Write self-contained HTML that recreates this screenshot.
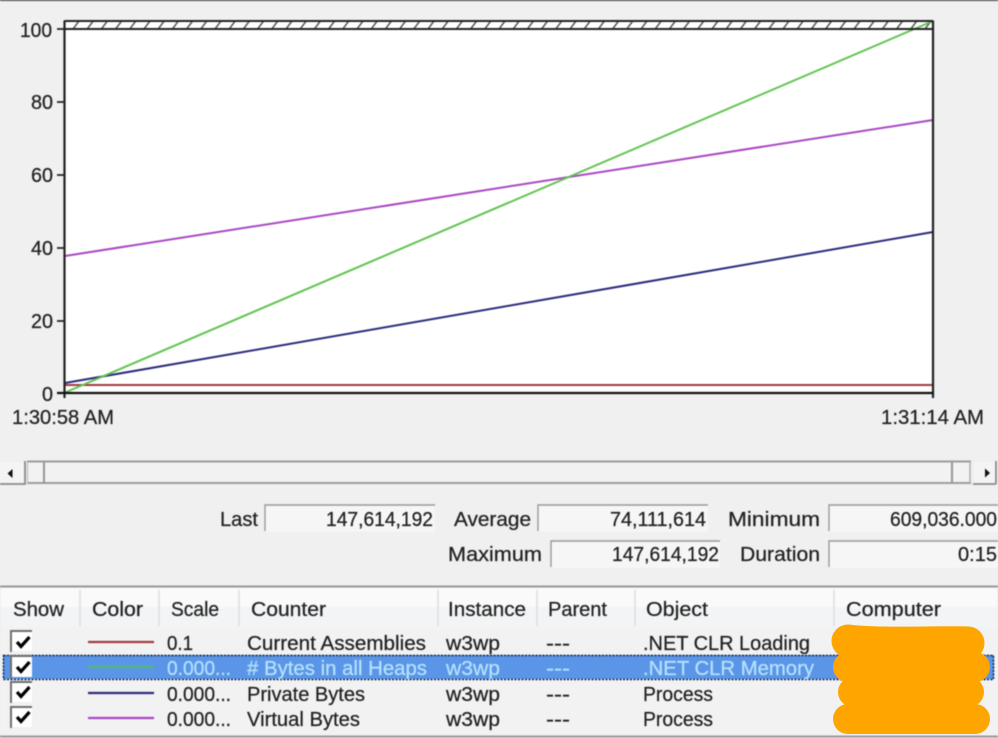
<!DOCTYPE html>
<html>
<head>
<meta charset="utf-8">
<style>
html,body{margin:0;padding:0;background:#f0f0f0;width:998px;height:738px;overflow:hidden}
svg{display:block;position:absolute;left:0;top:0}
text{font-family:"Liberation Sans",sans-serif;font-size:20px;fill:#222;stroke:#222;stroke-width:.25px}
.s{fill:#b4e2fb;stroke:#b4e2fb}
.b{filter:blur(.55px)}
</style>
</head>
<body>
<svg width="998" height="738" viewBox="0 0 998 738" xmlns="http://www.w3.org/2000/svg">
<defs>
<pattern id="h" width="14.2" height="8" patternUnits="userSpaceOnUse" x="70" y="21">
<path d="M3 8L9 0" stroke="#555" stroke-width="1.5" fill="none"/>
</pattern>
</defs>
<rect width="998" height="738" fill="#f0f0f0"/>
<g class="b">
<rect width="998" height="1" fill="#333"/>
<!-- chart -->
<rect x="64" y="21" width="869" height="372" fill="#fff"/>
<rect x="65" y="21" width="868" height="8" fill="url(#h)"/>
<path d="M65 385H933" stroke="#a03c40" stroke-width="2" fill="none"/>
<path d="M65 383L933 232" stroke="#2b2b7c" stroke-width="2" fill="none"/>
<path d="M65 256L933 120" stroke="#aa48c4" stroke-width="2" fill="none"/>
<path d="M64 393L933 21" stroke="#62c452" stroke-width="2" fill="none"/>
<path d="M64.5 21H933M64.5 29H933" stroke="#222" stroke-width="2" fill="none"/>
<path d="M64.5 20.5V398M933 20.5V398" stroke="#222" stroke-width="2.2" fill="none"/>
<path d="M57 393H933" stroke="#111" stroke-width="2.2" fill="none"/>
<path d="M57 29H64M57 102H64M57 175H64M57 248H64M57 321H64" stroke="#222" stroke-width="1.8" fill="none"/>
<text x="20" y="37" textLength="32" lengthAdjust="spacingAndGlyphs">100</text>
<text x="31" y="109" textLength="22" lengthAdjust="spacingAndGlyphs">80</text>
<text x="31" y="182" textLength="22" lengthAdjust="spacingAndGlyphs">60</text>
<text x="31" y="255" textLength="22" lengthAdjust="spacingAndGlyphs">40</text>
<text x="31" y="328" textLength="22" lengthAdjust="spacingAndGlyphs">20</text>
<text x="42" y="401" textLength="11" lengthAdjust="spacingAndGlyphs">0</text>
<text x="12" y="424" textLength="102" lengthAdjust="spacingAndGlyphs">1:30:58 AM</text>
<text x="881" y="424" textLength="103" lengthAdjust="spacingAndGlyphs">1:31:14 AM</text>
<!-- scrollbar -->
<rect x="0" y="462" width="24" height="21" fill="#f4f4f4"/>
<path d="M25 461V484H0" stroke="#8a8a8a" stroke-width="1.8" fill="none"/>
<path d="M7.5 473.5L12.5 469V478Z" fill="#111"/>
<rect x="27" y="462" width="944" height="21" fill="#f2f2f2"/>
<path d="M27 461.5H971" stroke="#9c9c9c" stroke-width="2" fill="none"/>
<path d="M27 483H971" stroke="#9c9c9c" stroke-width="2" fill="none"/>
<path d="M27.5 462V483" stroke="#c0c0c0" stroke-width="1.2" fill="none"/>
<path d="M44 462V483M952 462V483" stroke="#969696" stroke-width="2" fill="none"/>
<path d="M970 462V483" stroke="#b0b0b0" stroke-width="1.6" fill="none"/>
<rect x="974" y="462" width="24" height="21" fill="#f4f4f4"/>
<path d="M973 484H996M996 461V484" stroke="#8a8a8a" stroke-width="1.8" fill="none"/>
<path d="M990 473L985 468.5V477.5Z" fill="#111"/>
<!-- stats -->
<g fill="#f6f6f6" stroke="none">
<rect x="265" y="505" width="170" height="27"/>
<rect x="538" y="505" width="170" height="27"/>
<rect x="829" y="505" width="169" height="27"/>
<rect x="551" y="541" width="169" height="27"/>
<rect x="829" y="541" width="169" height="27"/>
</g>
<g stroke="#999" stroke-width="1.4" fill="none">
<path d="M265 531V505H435"/>
<path d="M538 531V505H708"/>
<path d="M829 531V505H998"/>
<path d="M551 567V541H720"/>
<path d="M829 567V541H998"/>
</g>
<text x="220" y="526" textLength="38" lengthAdjust="spacingAndGlyphs">Last</text>
<text x="326" y="526" textLength="107" lengthAdjust="spacingAndGlyphs">147,614,192</text>
<text x="454" y="526" textLength="77" lengthAdjust="spacingAndGlyphs">Average</text>
<text x="610" y="526" textLength="96" lengthAdjust="spacingAndGlyphs">74,111,614</text>
<text x="728" y="526" textLength="92" lengthAdjust="spacingAndGlyphs">Minimum</text>
<text x="890" y="526" textLength="107" lengthAdjust="spacingAndGlyphs">609,036.000</text>
<text x="448" y="561" textLength="94" lengthAdjust="spacingAndGlyphs">Maximum</text>
<text x="612" y="561" textLength="107" lengthAdjust="spacingAndGlyphs">147,614,192</text>
<text x="740" y="561" textLength="80" lengthAdjust="spacingAndGlyphs">Duration</text>
<text x="958" y="561" textLength="39" lengthAdjust="spacingAndGlyphs">0:15</text>
<!-- table -->
<rect x="1" y="587" width="996" height="149" fill="#f2f2f2"/>
<rect x="1" y="588" width="996" height="38" fill="#fafafa"/>
<rect x="1" y="607" width="996" height="20" fill="#f3f4f5"/>
<path d="M0 586.5H998M0 736.5H998" stroke="#999" stroke-width="2" fill="none"/>
<path d="M80 590V626M159 590V626M239 590V626M438 590V626M537 590V626M635 590V626M834 590V626" stroke="#dcdcdc" stroke-width="1.4" fill="none"/>
<text x="13" y="616" textLength="51" lengthAdjust="spacingAndGlyphs">Show</text>
<text x="92" y="616" textLength="51" lengthAdjust="spacingAndGlyphs">Color</text>
<text x="171" y="616" textLength="48" lengthAdjust="spacingAndGlyphs">Scale</text>
<text x="251" y="616" textLength="75" lengthAdjust="spacingAndGlyphs">Counter</text>
<text x="448" y="616" textLength="78" lengthAdjust="spacingAndGlyphs">Instance</text>
<text x="548" y="616" textLength="59" lengthAdjust="spacingAndGlyphs">Parent</text>
<text x="646" y="616" textLength="62" lengthAdjust="spacingAndGlyphs">Object</text>
<text x="846" y="616" textLength="95" lengthAdjust="spacingAndGlyphs">Computer</text>
<!-- selection -->
<rect x="3" y="655" width="991" height="24" fill="#5b95e8"/>
<rect x="3.5" y="655.5" width="990" height="24" fill="none" stroke="#16243e" stroke-width="1.5" stroke-dasharray="2 1.5"/>
<!-- checkboxes -->
<g>
<rect x="11" y="631" width="21" height="20" fill="#fff"/>
<path d="M11 652V631H32" stroke="#6f6f6f" stroke-width="2" fill="none"/>
<path d="M17 642L21 646.5L29.5 637" stroke="#000" stroke-width="3.2" fill="none"/>
<rect x="11" y="656" width="21" height="21" fill="#fff"/>
<path d="M11 678V656H32" stroke="#6f6f6f" stroke-width="2" fill="none"/>
<path d="M17 667L21 671.5L29.5 662" stroke="#000" stroke-width="3.2" fill="none"/>
<rect x="11" y="682" width="21" height="20" fill="#fff"/>
<path d="M11 703V682H32" stroke="#6f6f6f" stroke-width="2" fill="none"/>
<path d="M17 692L21 696.5L29.5 687" stroke="#000" stroke-width="3.2" fill="none"/>
<rect x="11" y="707" width="21" height="20" fill="#fff"/>
<path d="M11 728V707H32" stroke="#6f6f6f" stroke-width="2" fill="none"/>
<path d="M17 717L21 721.5L29.5 712" stroke="#000" stroke-width="3.2" fill="none"/>
</g>
<path d="M88 642H154" stroke="#a03c40" stroke-width="2.2" fill="none"/>
<path d="M88 667H154" stroke="#4fbc76" stroke-width="2.2" fill="none"/>
<path d="M88 693H154" stroke="#2b2b7c" stroke-width="2.2" fill="none"/>
<path d="M88 718H154" stroke="#aa48c4" stroke-width="2.2" fill="none"/>
<text x="167" y="650" textLength="26" lengthAdjust="spacingAndGlyphs">0.1</text>
<text x="247" y="650" textLength="179" lengthAdjust="spacingAndGlyphs">Current Assemblies</text>
<text x="446" y="650" textLength="54" lengthAdjust="spacingAndGlyphs">w3wp</text>
<text x="546" y="650" textLength="24" lengthAdjust="spacingAndGlyphs">---</text>
<text x="643" y="650" textLength="167" lengthAdjust="spacingAndGlyphs">.NET CLR Loading</text>
<text class="s" style="fill:#b4e2fb;stroke:#b4e2fb" x="167" y="675" textLength="64" lengthAdjust="spacingAndGlyphs">0.000...</text>
<text class="s" style="fill:#b4e2fb;stroke:#b4e2fb" x="247" y="675" textLength="180" lengthAdjust="spacingAndGlyphs"># Bytes in all Heaps</text>
<text class="s" style="fill:#b4e2fb;stroke:#b4e2fb" x="446" y="675" textLength="54" lengthAdjust="spacingAndGlyphs">w3wp</text>
<text class="s" style="fill:#b4e2fb;stroke:#b4e2fb" x="546" y="675" textLength="24" lengthAdjust="spacingAndGlyphs">---</text>
<text class="s" style="fill:#b4e2fb;stroke:#b4e2fb" x="643" y="675" textLength="171" lengthAdjust="spacingAndGlyphs">.NET CLR Memory</text>
<text x="167" y="701" textLength="64" lengthAdjust="spacingAndGlyphs">0.000...</text>
<text x="247" y="701" textLength="118" lengthAdjust="spacingAndGlyphs">Private Bytes</text>
<text x="446" y="701" textLength="54" lengthAdjust="spacingAndGlyphs">w3wp</text>
<text x="546" y="701" textLength="24" lengthAdjust="spacingAndGlyphs">---</text>
<text x="643" y="701" textLength="70" lengthAdjust="spacingAndGlyphs">Process</text>
<text x="167" y="726" textLength="64" lengthAdjust="spacingAndGlyphs">0.000...</text>
<text x="247" y="726" textLength="113" lengthAdjust="spacingAndGlyphs">Virtual Bytes</text>
<text x="446" y="726" textLength="54" lengthAdjust="spacingAndGlyphs">w3wp</text>
<text x="546" y="726" textLength="24" lengthAdjust="spacingAndGlyphs">---</text>
<text x="643" y="726" textLength="70" lengthAdjust="spacingAndGlyphs">Process</text>
</g>
<!-- redaction -->
<g stroke="#ffa500" stroke-linecap="round" stroke-linejoin="round" fill="none">
<path d="M848 641C880 645 930 642 968 643" stroke-width="33"/>
<path d="M848 667H975" stroke-width="30"/>
<path d="M853 692H969" stroke-width="30"/>
<path d="M848 719H975" stroke-width="30"/>
</g>
</svg>
</body>
</html>
